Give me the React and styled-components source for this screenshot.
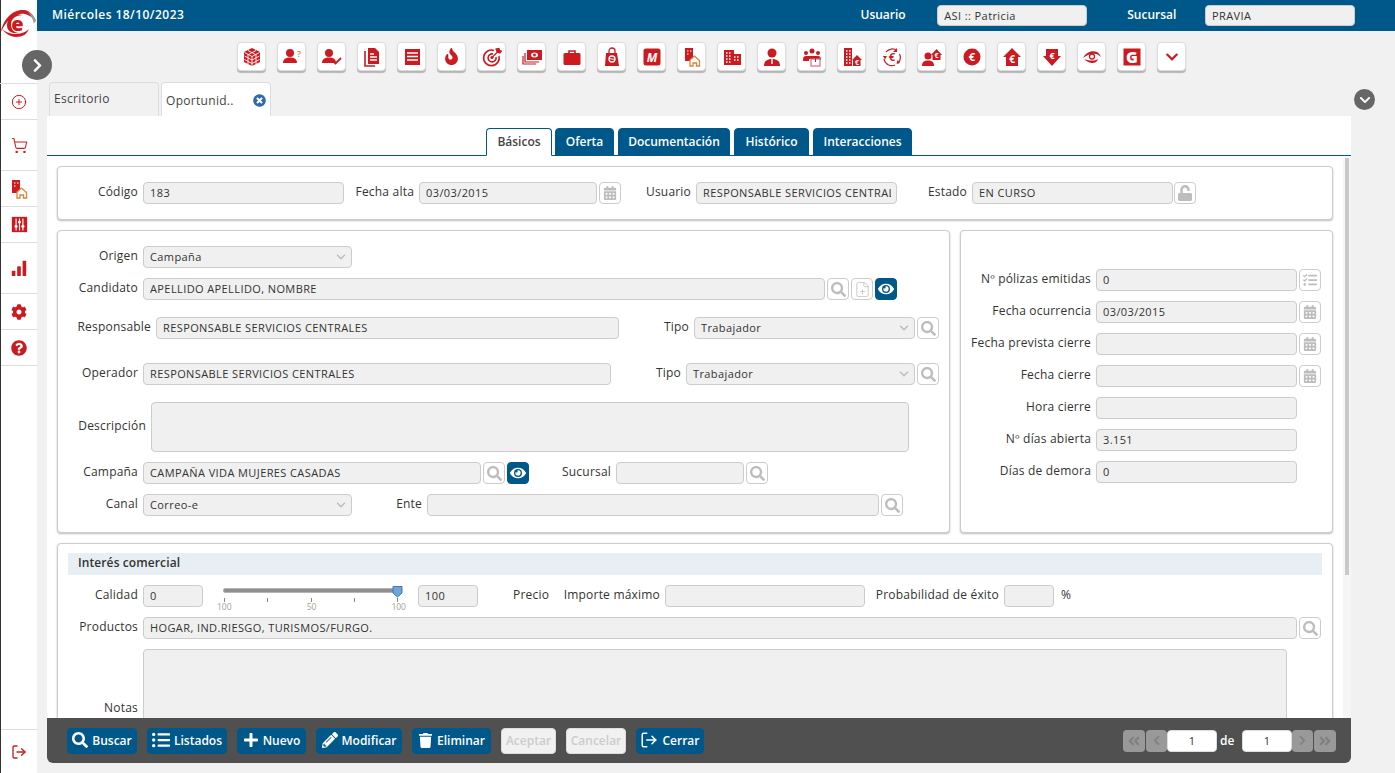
import styled, { createGlobalStyle } from 'styled-components'
import {
  FaSearch,
  FaListUl,
  FaPlus,
  FaPencilAlt,
  FaTrash,
  FaCalendarAlt,
  FaUnlock,
  FaEye,
  FaTasks,
  FaFire,
  FaCog,
  FaQuestionCircle,
  FaChevronRight,
  FaChevronDown,
  FaChevronLeft,
  FaAngleDoubleLeft,
  FaAngleDoubleRight,
  FaTimesCircle,
} from 'react-icons/fa'
import { ChevronDown, CirclePlus, ShoppingCart, LogOut, FilePlus } from 'lucide-react'

const RED = '#cc1a20'
const BLUE = '#00578a'

const GlobalStyle = createGlobalStyle`
  html, body {
    margin: 0;
    height: 100%;
    overflow: hidden;
    background: #f1f1f1;
    font-family: 'Open Sans', 'DejaVu Sans', sans-serif;
    font-size: 12px;
    color: #333;
  }
  * { box-sizing: border-box; }
`

const Page = styled.div`
  display: flex;
  width: 1395px;
  height: 773px;
  position: relative;
  overflow: hidden;
`

/* sidebar */
const Side = styled.aside`
  width: 37px;
  flex: none;
  background: #fff;
  border-left: 1px solid #333;
  display: flex;
  flex-direction: column;
`
const LogoBox = styled.div`
  height: 84px;
  padding-top: 5px;
  margin-left: -1px;
  border-bottom: 1px solid #ddd;
`
const SideItem = styled.div`
  height: ${(p) => p.$h}px;
  display: flex;
  align-items: center;
  justify-content: center;
  border-bottom: 1px solid #ddd;
  color: ${RED};
`
const SideBottom = styled(SideItem)`
  margin-top: auto;
  border-bottom: none;
  border-top: 1px solid #ddd;
`
const RoundToggle = styled.div`
  position: absolute;
  left: ${(p) => p.$x}px;
  top: ${(p) => p.$y}px;
  width: ${(p) => p.$s}px;
  height: ${(p) => p.$s}px;
  border-radius: 50%;
  background: #666;
  color: #fff;
  display: flex;
  align-items: center;
  justify-content: center;
`

/* top */
const Main = styled.div`
  flex: 1;
  min-width: 0;
  display: flex;
  flex-direction: column;
`
const Header = styled.header`
  height: 31px;
  flex: none;
  background: ${BLUE};
  color: #fff;
  display: flex;
  align-items: center;
  padding-left: 15px;
  font-weight: 600;
  font-size: 12px;
`
const HeadDate = styled.span`
  width: 811px;
  letter-spacing: 0.45px;
  padding-bottom: 2px;
`
const HeadLabel = styled.span`
  width: ${(p) => p.$w}px;
  padding-bottom: 2px;
`
const HeadInput = styled.input`
  width: 150px;
  height: 21px;
  margin-right: 40px;
  border: 1px solid #ccc;
  border-radius: 4px;
  background: #f0f0f0;
  padding: 0 6px 1px;
  font: 11px 'Open Sans', sans-serif;
  letter-spacing: 0.4px;
  color: #333;
`
const Toolbar = styled.div`
  height: 51px;
  flex: none;
  display: flex;
  gap: 11px;
  padding: 11px 0 0 200px;
`
const ToolBtn = styled.div`
  width: 29px;
  height: 29px;
  background: #fff;
  border: 1px solid #ddd;
  border-radius: 4px;
  box-shadow: 0 2px 1px #b5b5b5;
  color: ${RED};
  display: flex;
  align-items: center;
  justify-content: center;
`
const PageTabs = styled.div`
  height: 34px;
  flex: none;
  display: flex;
  gap: 2px;
  padding-left: 12px;
`
const PageTab = styled.div`
  width: 110px;
  height: 34px;
  border: 1px solid #ddd;
  border-bottom: none;
  border-radius: 4px 4px 0 0;
  background: ${(p) => (p.$active ? '#fff' : '#f1f1f1')};
  display: flex;
  align-items: center;
  justify-content: space-between;
  padding: ${(p) => (p.$active ? '2px 4px 0 4px' : '0 4px 2px 4px')};
  letter-spacing: 0.3px;
  color: #444;
`

/* panel */
const Panel = styled.main`
  position: relative;
  margin-left: 10px;
  width: 1304px;
  height: 602px;
  flex: none;
  background: #fff;
  overflow: hidden;
  padding: 12px 18px 0 10px;
`
const ScrollTrack = styled.div`
  position: absolute;
  right: 0;
  top: 41px;
  bottom: 0;
  width: 8px;
  padding: 1px 2px 0 2px;
  background: #f6f6f6;
`
const ScrollThumb = styled.div`
  height: 417px;
  background: #c9c9c9;
`
const TabLine = styled.nav`
  display: flex;
  gap: 4px;
  height: 28px;
  margin: 0 -18px 10px -10px;
  padding-left: 439px;
  border-bottom: 1px solid ${BLUE};
`
const Tab = styled.div`
  height: 28px;
  width: ${(p) => p.$w}px;
  margin-right: ${(p) => p.$mr || 0}px;
  border-radius: 4px 4px 0 0;
  border: 1px solid ${BLUE};
  background: ${(p) => (p.$active ? '#fff' : BLUE)};
  border-bottom-color: ${(p) => (p.$active ? '#fff' : BLUE)};
  color: ${(p) => (p.$active ? '#444' : '#fff')};
  font-weight: 600;
  display: flex;
  align-items: center;
  justify-content: center;
  letter-spacing: 0;
  padding-bottom: 1px;
`
const Card = styled.section`
  background: #fff;
  border: 1px solid #ccc;
  border-radius: 4px;
  box-shadow: 0 1px 2px #bbb;
  height: ${(p) => p.$h}px;
  padding: ${(p) => p.$pad || '15px 0 0 0'};
  margin-bottom: 10px;
  ${(p) => p.$w && `width: ${p.$w}px; flex: none; margin-bottom: 0;`}
`
const Split = styled.div`
  display: flex;
  gap: 10px;
  margin-bottom: 10px;
`
const Row = styled.div`
  display: flex;
  align-items: center;
  margin-top: ${(p) => p.$mt || 0}px;
`
const Label = styled.label`
  width: ${(p) => p.$w}px;
  flex: none;
  text-align: right;
  padding-right: 5px;
  padding-bottom: 3px;
  letter-spacing: 0.2px;
  white-space: nowrap;
  color: #333;
`
const Plain = styled.span`
  flex: none;
  width: ${(p) => p.$w}px;
  margin-left: ${(p) => p.$ml}px;
  padding-bottom: 3px;
  letter-spacing: 0.2px;
`
const Input = styled.input`
  width: ${(p) => p.$w}px;
  height: 22px;
  flex: none;
  border: 1px solid #ccc;
  border-radius: 4px;
  background: #f0f0f0;
  padding: 0 5px 2px 6px;
  font: 11px 'Open Sans', sans-serif;
  letter-spacing: 0.4px;
  color: #333;
  outline: none;
`
const Area = styled.textarea`
  display: block;
  width: ${(p) => p.$w}px;
  height: ${(p) => p.$h}px;
  flex: none;
  border: 1px solid #ccc;
  border-radius: 4px;
  background: #f0f0f0;
  resize: none;
  outline: none;
`
const SelectWrap = styled.div`
  position: relative;
  flex: none;
  color: #bbb;
  svg {
    position: absolute;
    right: 4px;
    top: 4px;
  }
`
const IconBtn = styled.div`
  width: 22px;
  height: 22px;
  flex: none;
  margin-left: ${(p) => (p.$tight ? 1 : 2)}px;
  border: 1px solid ${(p) => (p.$on ? BLUE : '#ccc')};
  border-radius: 4px;
  background: ${(p) => (p.$on ? BLUE : '#fff')};
  color: ${(p) => (p.$on ? '#fff' : '#bdbdbd')};
  display: flex;
  align-items: center;
  justify-content: center;
`
const SectionTitle = styled.h3`
  margin: 0 10px 10px;
  height: 22px;
  padding: 0 0 3px 10px;
  background: #e8eff4;
  font-size: 12px;
  font-weight: 600;
  letter-spacing: 0.1px;
  display: flex;
  align-items: center;
  color: #333;
`
const Slider = styled.div`
  position: relative;
  width: 175px;
  height: 22px;
  flex: none;
  margin: 0 20px 0 20px;
`
const Track = styled.div`
  position: absolute;
  top: 3px;
  left: 0;
  right: 0;
  height: 5px;
  background: #8f8f8f;
  border: 1px solid #b5b5b5;
  border-radius: 2px;
`
const Thumb = styled.svg`
  position: absolute;
  right: -5px;
  top: 0;
`
const Ticks = styled.div`
  position: absolute;
  top: 13px;
  left: 1px;
  right: 0;
  display: flex;
  justify-content: space-between;
`
const Tick = styled.i`
  width: 1px;
  height: 4px;
  background: #888;
`
const Scale = styled.div`
  position: absolute;
  top: 16px;
  left: -6px;
  right: -8px;
  display: flex;
  justify-content: space-between;
  font-size: 8.5px;
  line-height: 12px;
  color: #9aa68f;
`

/* bottom bar */
const Bottom = styled.footer`
  margin-left: 10px;
  width: 1304px;
  height: 45px;
  flex: none;
  background: #505050;
  border-radius: 0 0 6px 6px;
  display: flex;
  align-items: center;
  padding: 0 15px 0 20px;
  gap: 10px;
`
const ActionBtn = styled.button`
  width: ${(p) => p.$w}px;
  height: 26px;
  padding: 0 0 1px;
  border-radius: 4px;
  border: 1px solid ${(p) => (p.disabled ? '#ddd' : BLUE)};
  background: ${(p) => (p.disabled ? '#f1f1f1' : BLUE)};
  color: ${(p) => (p.disabled ? '#ccc' : '#fff')};
  font: 600 12px 'Open Sans', sans-serif;
  display: flex;
  align-items: center;
  justify-content: center;
  gap: 4px;
`
const Pager = styled.div`
  margin-left: auto;
  display: flex;
  align-items: center;
`
const PageBtn = styled.div`
  width: ${(p) => p.$w}px;
  height: 22px;
  margin-right: ${(p) => p.$mr || 0}px;
  margin-left: ${(p) => p.$ml || 0}px;
  border-radius: 4px;
  background: #999;
  color: #808080;
  display: flex;
  align-items: center;
  justify-content: center;
`
const PageInput = styled.input`
  width: 50px;
  height: 22px;
  border: 1px solid #ddd;
  border-radius: 4px;
  background: #fff;
  text-align: center;
  font: 11px 'Open Sans', sans-serif;
  color: #333;
`
const PageOf = styled.span`
  width: 25px;
  padding-left: 3px;
  color: #fff;
  font-weight: 600;
`

/* drawings */
const Ic = ({ children, s = 20 }) => (
  <svg width={s} height={s} viewBox="0 0 20 20" fill="currentColor">
    {children}
  </svg>
)
const Logo = () => (
  <svg width="38" height="36" viewBox="0 0 38 36">
    <path d="M1 27C3 14 13 4 24 5c5 .5 9 4 12 11-4-4-7-6-11-7C16 7 6 15 1 27z" fill={RED} />
    <path d="M27 6c4 2 7 5 9 10-1 1-2 2-2 3-1-5-3-9-7-13z" fill="#9c9c9c" />
    <path d="M1 23c4 5 9 9 15 9 7 0 11-3 13-8-2 2-7 5-13 5-6 0-11-2-15-6z" fill={RED} />
    <path d="M7 21C7 14 11 9 17 9c2 0 4 .5 6 1.500-6-1-12 3-12 9 0 5 3 8 8 8.500-7 1-12-2-12-7.500z" fill={RED} />
    <text x="17.500" y="26" textAnchor="middle" fontSize="20" fontWeight="800" fontFamily="Open Sans" fill={RED}>e</text>
  </svg>
)
const Cube = () => (
  <Ic>
    <path d="M10 1l8 4v10l-8 4-8-4V5z" />
    <path d="M2.500 5.500L10 9.500l7.500-4M10 9.500V19M2.500 9l7.500 4 7.500-4M2.500 12.500l7.500 4 7.500-4M6 3.500l8 4.200M14 3.500L6 7.700M6 7.500V17M14 7.500V17" stroke="#fff" strokeWidth=".9" fill="none" />
  </Ic>
)
const Person = ({ x = 0, y = 0, k = 1 }) => (
  <g transform={`translate(${x} ${y}) scale(${k})`}>
    <circle cx="8" cy="6" r="4" />
    <path d="M1 16c0-4 3-5.500 7-5.500s7 1.500 7 5.500z" />
  </g>
)
const UserAsk = () => (
  <Ic>
    <Person />
    <text x="15" y="10" fontSize="9" fontFamily="Open Sans" fontWeight="600" fill="#d8843a">?</text>
  </Ic>
)
const UserCheck = () => (
  <Ic>
    <Person x={-1} />
    <path d="M11 14l2.500 2.500L19 11" stroke={RED} strokeWidth="1.800" fill="none" />
  </Ic>
)
const Files = () => (
  <Ic>
    <path d="M6 1h7l4 4v12H6z" />
    <path d="M3 4v15h10" stroke={RED} strokeWidth="1.600" fill="none" />
    <path d="M8 7h4M8 10h7M8 13h7" stroke="#fff" strokeWidth="1.500" />
  </Ic>
)
const Ledger = () => (
  <Ic>
    <rect x="3" y="2" width="15" height="16" />
    <path d="M5 6h11M5 9.500h11M5 13h11" stroke="#fff" strokeWidth="1.600" />
  </Ic>
)
const Target = () => (
  <Ic>
    <g fill="none" stroke={RED} strokeWidth="1.600">
      <path d="M12 3.500A7.800 7.800 0 1 0 17 9" />
      <path d="M11 7A4 4 0 1 0 14 10" />
    </g>
    <circle cx="10" cy="10.500" r="1.600" />
    <path d="M10 10.500L16 4.500M14 2l1 3 3 1 1.500-2-2-.5-.5-2z" stroke={RED} strokeWidth="1.200" />
  </Ic>
)
const Money = () => (
  <Ic>
    <rect x="5" y="3" width="15" height="10" />
    <ellipse cx="12.500" cy="8" rx="3.500" ry="2.500" fill="#fff" />
    <circle cx="12.500" cy="8" r="1.400" />
    <path d="M3 6v9h14M1 9v8h13" stroke={RED} strokeWidth="1.200" fill="none" />
  </Ic>
)
const Case = () => (
  <Ic>
    <path d="M7 6V4h6v2" fill="none" stroke={RED} strokeWidth="1.600" />
    <rect x="1.500" y="6" width="17" height="12" rx="1.500" />
  </Ic>
)
const Bag = () => (
  <Ic>
    <path d="M4 6h11l2 13H3z" />
    <path d="M7 7V4a3 3 0 0 1 6 0v3" fill="none" stroke={RED} strokeWidth="1.300" />
    <circle cx="10" cy="12" r="3" fill="none" stroke="#fff" strokeWidth="1.300" />
    <path d="M7 12c2-1 4 1 6 0" fill="none" stroke="#fff" />
  </Ic>
)
const MarkM = () => (
  <Ic>
    <rect x="1.500" y="1.500" width="17" height="17" rx="2.500" />
    <text x="10" y="15" textAnchor="middle" fontSize="12" fontWeight="700" fontStyle="italic" fontFamily="Open Sans" fill="#fff">M</text>
  </Ic>
)
const DocHouse = () => (
  <Ic>
    <path d="M3 1h8v13H3z" />
    <path d="M5 4h1.500M8 4h1.500M5 7h1.500" stroke="#fff" />
    <path d="M8 19v-6l4.500-4 5 4.500V19h-3v-3h-3.500v3z" fill="#fff" stroke="#d8843a" strokeWidth="1.300" />
  </Ic>
)
const Block = () => (
  <Ic>
    <path d="M2 3h10v4h7v11H2z" />
    <path d="M4 6h1.500M7 6h1.500M4 9h1.500M7 9h1.500M4 12h1.500M7 12h1.500M4 15h1.500M7 15h1.500M12 10h1.500M15 10h1.500M12 13h1.500M15 13h1.500" stroke="#fff" strokeWidth="1.400" />
  </Ic>
)
const Agent = () => (
  <Ic>
    <circle cx="10" cy="6" r="4.500" />
    <path d="M2 19c0-5 3-7 8-7s8 2 8 7z" />
    <path d="M10 12v5" stroke="#fff" strokeWidth="1.400" />
  </Ic>
)
const Group = () => (
  <Ic>
    <circle cx="10" cy="4" r="2.500" />
    <circle cx="4" cy="6" r="2" />
    <circle cx="16" cy="6" r="2" />
    <path d="M1 13c0-3 1-4 3-4h12c2 0 3 1 3 4H13v-1H7v2H1z" />
    <rect x="9" y="12" width="9" height="7" fill="#fff" stroke="#d8707a" strokeWidth="1.200" />
    <path d="M13.500 10v5" stroke={RED} />
  </Ic>
)
const Euro = ({ x, y, size = 8, fill = '#fff' }) => (
  <text x={x} y={y} textAnchor="middle" fontSize={size} fontWeight="700" fontFamily="Open Sans" fill={fill}>€</text>
)
const BlockHouse = () => (
  <Ic>
    <path d="M2 1h8v18H2z" />
    <path d="M4 4h1.500M7 4h1.500M4 7h1.500M7 7h1.500M4 10h1.500M7 10h1.500M4 13h1.500M7 13h1.500M4 16h1.500M7 16h1.500" stroke="#fff" strokeWidth="1.400" />
    <path d="M10 13l5-5 5 5h-1.500v6H11v-6z" />
    <Euro x={15} y={17.5} size={7} />
  </Ic>
)
const Cycle = () => (
  <Ic>
    <g fill="none" stroke={RED} strokeWidth="1.200">
      <path d="M4 5a8 8 0 0 1 11-1.500M17.500 7a8 8 0 0 1-1.500 9M13 18a8 8 0 0 1-11-6" />
    </g>
    <path d="M15 1v4h-4zM18 16l-3.500 1 1-4zM1 9l2 3.500 2-3.500z" />
    <Euro x={10} y={14} size={11} fill={RED} />
  </Ic>
)
const UserHouse = () => (
  <Ic>
    <circle cx="6" cy="9" r="3.500" />
    <path d="M0 19c0-4 2-5.500 6-5.500s6 1.500 6 5.500z" />
    <path d="M9 8l5.500-6L20 8h-1.500v5h-8V8z" />
    <Euro x={14.5} y={11} size={7} />
  </Ic>
)
const EuroCircle = () => (
  <Ic>
    <circle cx="10" cy="10" r="8.500" />
    <Euro x={10} y={14} size={11} />
  </Ic>
)
const ArrowUp = () => (
  <Ic>
    <path d="M10 1l9 9h-3v9H4v-9H1z" />
    <Euro x={10} y={16} size={10} />
  </Ic>
)
const ArrowDown = () => (
  <Ic>
    <path d="M4 2h12v7h3l-9 10-9-10h3z" />
    <Euro x={10} y={12} size={9} />
  </Ic>
)
const EyeSwirl = () => (
  <Ic>
    <path d="M1 11C4 5 10 3 15 5c2 1 3 3 4 5-3-3-6-4-9-3-3 0-6 2-9 4z" />
    <path d="M2 12c4 4 9 5 12 3 1-1 2-2 2-3-3 2-8 2-14 0z" />
    <circle cx="10" cy="9.500" r="2.500" fill="none" stroke={RED} strokeWidth="1.300" />
  </Ic>
)
const MarkG = () => (
  <Ic>
    <rect x="1.500" y="1.500" width="17" height="17" />
    <text x="10" y="16" textAnchor="middle" fontSize="16" fontWeight="800" fontFamily="Open Sans" fill="#fff">G</text>
  </Ic>
)
const Mixer = () => (
  <Ic s={17}>
    <rect x="1" y="1" width="18" height="18" />
    <path d="M6 3v14M10 3v14M14 3v14" stroke="#fff" strokeWidth="1.300" />
    <circle cx="6" cy="12" r="1.800" fill="#fff" />
    <circle cx="10" cy="7" r="1.800" fill="#fff" />
    <circle cx="14" cy="12" r="1.800" fill="#fff" />
  </Ic>
)
const Bars = () => (
  <Ic s={18}>
    <rect x="2" y="13" width="4" height="6" rx=".8" />
    <rect x="8" y="8" width="4" height="11" rx=".8" />
    <rect x="14" y="2" width="4" height="17" rx=".8" />
  </Ic>
)

const tools = [
  <Cube key="1" />, <UserAsk key="2" />, <UserCheck key="3" />, <Files key="4" />,
  <Ledger key="5" />, <FaFire key="6" size={17} />, <Target key="7" />, <Money key="8" />,
  <Case key="9" />, <Bag key="10" />, <MarkM key="11" />, <DocHouse key="12" />,
  <Block key="13" />, <Agent key="14" />, <Group key="15" />, <BlockHouse key="16" />,
  <Cycle key="17" />, <UserHouse key="18" />, <EuroCircle key="19" />, <ArrowUp key="20" />,
  <ArrowDown key="21" />, <EyeSwirl key="22" />, <MarkG key="23" />, <FaChevronDown key="24" size={14} />,
]

const Field = ({ w, value = '' }) => <Input $w={w} readOnly value={value} />

const Select = ({ w, value }) => (
  <SelectWrap>
    <Input $w={w} readOnly value={value} />
    <ChevronDown size={14} strokeWidth={2.5} />
  </SelectWrap>
)

const Search = () => (
  <IconBtn>
    <FaSearch size={15} />
  </IconBtn>
)
const Calendar = () => (
  <IconBtn>
    <FaCalendarAlt size={14} />
  </IconBtn>
)
const Eye = () => (
  <IconBtn $on>
    <FaEye size={16} />
  </IconBtn>
)

function RightRow({ label, value, icon, first }) {
  return (
    <Row $mt={first ? 0 : 10}>
      <Label $w={135}>{label}</Label>
      <Field w={201} value={value} />
      {icon}
    </Row>
  )
}

export default function App() {
  return (
    <Page>
      <GlobalStyle />
      <Side>
        <LogoBox>
          <Logo />
        </LogoBox>
        <SideItem $h={36}>
          <CirclePlus size={16} strokeWidth={1.5} />
        </SideItem>
        <SideItem $h={51}>
          <ShoppingCart size={17} strokeWidth={1.5} />
        </SideItem>
        <SideItem $h={36}>
          <DocHouse />
        </SideItem>
        <SideItem $h={36}>
          <Mixer />
        </SideItem>
        <SideItem $h={51}>
          <Bars />
        </SideItem>
        <SideItem $h={36}>
          <FaCog size={16} />
        </SideItem>
        <SideItem $h={36}>
          <FaQuestionCircle size={16} />
        </SideItem>
        <SideBottom $h={44}>
          <LogOut size={16} />
        </SideBottom>
      </Side>

      <RoundToggle $x={22} $y={50} $s={30}>
        <FaChevronRight size={15} />
      </RoundToggle>
      <RoundToggle $x={1354} $y={89} $s={21}>
        <FaChevronDown size={12} />
      </RoundToggle>

      <Main>
        <Header>
          <HeadDate>Miércoles 18/10/2023</HeadDate>
          <HeadLabel $w={77}>Usuario</HeadLabel>
          <HeadInput readOnly value="ASI :: Patricia" />
          <HeadLabel $w={78}>Sucursal</HeadLabel>
          <HeadInput readOnly value="PRAVIA" />
        </Header>

        <Toolbar>
          {tools.map((t, i) => (
            <ToolBtn key={i}>{t}</ToolBtn>
          ))}
        </Toolbar>

        <PageTabs>
          <PageTab>Escritorio</PageTab>
          <PageTab $active>
            Oportunid..
            <FaTimesCircle size={13} color="#2f6ca8" />
          </PageTab>
        </PageTabs>

        <Panel>
          <TabLine>
            <Tab $w={66} $mr={-1} $active>Básicos</Tab>
            <Tab $w={59}>Oferta</Tab>
            <Tab $w={112}>Documentación</Tab>
            <Tab $w={75}>Histórico</Tab>
            <Tab $w={99}>Interacciones</Tab>
          </TabLine>

          <Card $h={54}>
            <Row>
              <Label $w={85}>Código</Label>
              <Field w={201} value="183" />
              <Label $w={75}>Fecha alta</Label>
              <Field w={178} value="03/03/2015" />
              <Calendar />
              <Label $w={75}>Usuario</Label>
              <Field w={201} value="RESPONSABLE SERVICIOS CENTRAL" />
              <Label $w={75}>Estado</Label>
              <Field w={201} value="EN CURSO" />
              <IconBtn $tight>
                <FaUnlock size={16} />
              </IconBtn>
            </Row>
          </Card>

          <Split>
            <Card $w={893} $h={303}>
              <Row>
                <Label $w={85}>Origen</Label>
                <Select w={209} value="Campaña" />
              </Row>
              <Row $mt={10}>
                <Label $w={85}>Candidato</Label>
                <Field w={682} value="APELLIDO APELLIDO, NOMBRE" />
                <Search />
                <IconBtn>
                  <FilePlus size={17} strokeWidth={1.1} />
                </IconBtn>
                <Eye />
              </Row>
              <Row $mt={17}>
                <Label $w={98}>Responsable</Label>
                <Field w={463} value="RESPONSABLE SERVICIOS CENTRALES" />
                <Label $w={75}>Tipo</Label>
                <Select w={221} value="Trabajador" />
                <Search />
              </Row>
              <Row $mt={24}>
                <Label $w={85}>Operador</Label>
                <Field w={468} value="RESPONSABLE SERVICIOS CENTRALES" />
                <Label $w={75}>Tipo</Label>
                <Select w={229} value="Trabajador" />
                <Search />
              </Row>
              <Row $mt={17}>
                <Label $w={93}>Descripción</Label>
                <Area $w={758} $h={50} readOnly />
              </Row>
              <Row $mt={10}>
                <Label $w={85}>Campaña</Label>
                <Field w={338} value="CAMPAÑA VIDA MUJERES CASADAS" />
                <Search />
                <Eye />
                <Label $w={87}>Sucursal</Label>
                <Field w={128} />
                <Search />
              </Row>
              <Row $mt={10}>
                <Label $w={85}>Canal</Label>
                <Select w={209} value="Correo-e" />
                <Label $w={75}>Ente</Label>
                <Field w={452} />
                <Search />
              </Row>
            </Card>

            <Card $w={373} $h={303} $pad="38px 0 0 0">
              <RightRow
                first
                label="Nº pólizas emitidas"
                value="0"
                icon={
                  <IconBtn>
                    <FaTasks size={14} />
                  </IconBtn>
                }
              />
              <RightRow label="Fecha ocurrencia" value="03/03/2015" icon={<Calendar />} />
              <RightRow label="Fecha prevista cierre" icon={<Calendar />} />
              <RightRow label="Fecha cierre" icon={<Calendar />} />
              <RightRow label="Hora cierre" />
              <RightRow label="Nº días abierta" value="3.151" />
              <RightRow label="Días de demora" value="0" />
            </Card>
          </Split>

          <Card $h={300} $pad="9px 0 0 0">
            <SectionTitle>Interés comercial</SectionTitle>
            <Row>
              <Label $w={85}>Calidad</Label>
              <Field w={60} value="0" />
              <Slider>
                <Track />
                <Thumb width="11" height="13" viewBox="0 0 11 13">
                  <path d="M1 1.500h9v6.500l-4.500 4-4.500-4z" fill="#6ea6d8" stroke="#3f78ad" />
                </Thumb>
                <Ticks>
                  <Tick />
                  <Tick />
                  <Tick />
                  <Tick />
                  <Tick />
                </Ticks>
                <Scale>
                  <span>100</span>
                  <span>50</span>
                  <span>100</span>
                </Scale>
              </Slider>
              <Field w={60} value="100" />
              <Plain $w={41} $ml={35}>Precio</Plain>
              <Label $w={111}>Importe máximo</Label>
              <Field w={200} />
              <Label $w={139}>Probabilidad de éxito</Label>
              <Field w={50} />
              <Plain $w={20} $ml={7}>%</Plain>
            </Row>
            <Row $mt={10}>
              <Label $w={85}>Productos</Label>
              <Field w={1154} value="HOGAR, IND.RIESGO, TURISMOS/FURGO." />
              <Search />
            </Row>
            <Row $mt={10}>
              <Label $w={85}>Notas</Label>
              <Area $w={1144} $h={120} readOnly />
            </Row>
          </Card>
          <ScrollTrack>
            <ScrollThumb />
          </ScrollTrack>
        </Panel>

        <Bottom>
          <ActionBtn $w={70}>
            <FaSearch size={16} /> Buscar
          </ActionBtn>
          <ActionBtn $w={80}>
            <FaListUl size={18} /> Listados
          </ActionBtn>
          <ActionBtn $w={69}>
            <FaPlus size={16} /> Nuevo
          </ActionBtn>
          <ActionBtn $w={86}>
            <FaPencilAlt size={16} /> Modificar
          </ActionBtn>
          <ActionBtn $w={79}>
            <FaTrash size={15} /> Eliminar
          </ActionBtn>
          <ActionBtn $w={55} disabled>Aceptar</ActionBtn>
          <ActionBtn $w={60} disabled>Cancelar</ActionBtn>
          <ActionBtn $w={68}>
            <LogOut size={18} /> Cerrar
          </ActionBtn>
          <Pager>
            <PageBtn $w={22} $mr={1}>
              <FaAngleDoubleLeft size={14} />
            </PageBtn>
            <PageBtn $w={21}>
              <FaChevronLeft size={11} />
            </PageBtn>
            <PageInput readOnly value="1" />
            <PageOf>de</PageOf>
            <PageInput readOnly value="1" />
            <PageBtn $w={21}>
              <FaChevronRight size={11} />
            </PageBtn>
            <PageBtn $w={22} $ml={1}>
              <FaAngleDoubleRight size={14} />
            </PageBtn>
          </Pager>
        </Bottom>
      </Main>
    </Page>
  )
}
